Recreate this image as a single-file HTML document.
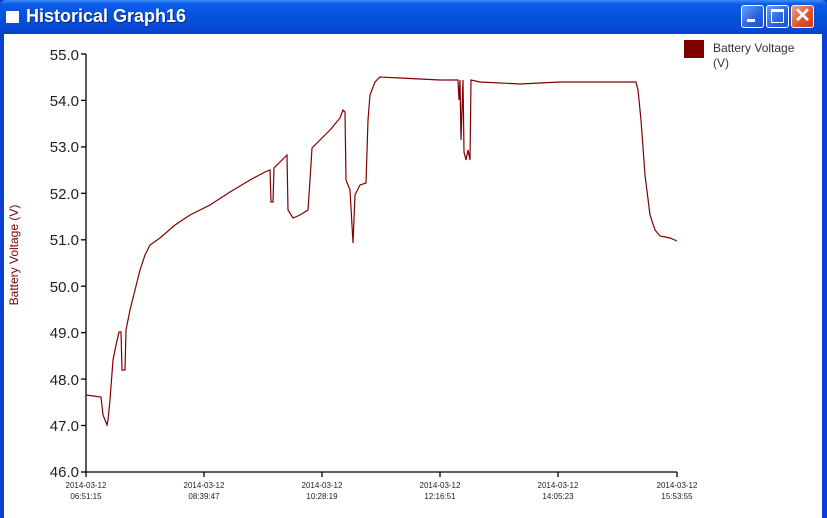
<!DOCTYPE html>
<html><head><meta charset="utf-8"><style>
html,body{margin:0;padding:0;width:827px;height:518px;overflow:hidden;background:#0a3fd6;font-family:"Liberation Sans",sans-serif}
.tb{position:absolute;left:0;top:0;width:827px;height:34px;background:linear-gradient(#3d8cf7 0,#0a5ce8 12%,#0551e0 50%,#0749d4 85%,#0a3fc4 100%);border-radius:6px 6px 0 0}
.title{position:absolute;left:26px;top:6px;color:#fff;font-weight:bold;font-size:18px;text-shadow:1px 1px #0a2a80}
.ico{position:absolute;left:6px;top:11px;width:13px;height:10px;background:#fff;border-top:2px solid #fff}
.btn{position:absolute;top:5px;width:21px;height:21px;border:1px solid #fff;border-radius:3px;background:linear-gradient(135deg,#6a9cf7,#2a62e0 60%,#1e50d0)}
.cl{background:linear-gradient(135deg,#f0a080,#e0502a 60%,#c8401a)}
.client{position:absolute;left:4px;top:34px;width:818px;height:484px;background:#fff}
</style></head><body>
<div class="tb"><div class="ico"></div><div class="title">Historical Graph16</div>
<div class="btn" style="left:741px"><div style="position:absolute;left:5px;top:13px;width:8px;height:3px;background:#fff"></div></div>
<div class="btn" style="left:766px"><div style="position:absolute;left:4px;top:3px;width:11px;height:10px;border:1px solid #fff;border-top:3px solid #fff"></div></div>
<div class="btn cl" style="left:791px;color:#fff;font-size:20px;font-weight:bold;text-align:center;line-height:21px">✕</div>
</div>
<div class="client"></div>
<svg width="827" height="518" style="position:absolute;left:0;top:0" font-family="Liberation Sans, sans-serif">
<g stroke="#000" stroke-width="1.3">
<line x1="86" y1="54" x2="86" y2="472"/><line x1="86" y1="472" x2="677" y2="472"/>
<line x1="81" y1="54" x2="86" y2="54"/><line x1="81" y1="100.4" x2="86" y2="100.4"/><line x1="81" y1="146.9" x2="86" y2="146.9"/><line x1="81" y1="193.3" x2="86" y2="193.3"/><line x1="81" y1="239.8" x2="86" y2="239.8"/><line x1="81" y1="286.2" x2="86" y2="286.2"/><line x1="81" y1="332.6" x2="86" y2="332.6"/><line x1="81" y1="379.1" x2="86" y2="379.1"/><line x1="81" y1="425.5" x2="86" y2="425.5"/><line x1="81" y1="472" x2="86" y2="472"/>
<line x1="86" y1="472" x2="86" y2="477"/><line x1="204" y1="472" x2="204" y2="477"/><line x1="322" y1="472" x2="322" y2="477"/><line x1="440" y1="472" x2="440" y2="477"/><line x1="558" y1="472" x2="558" y2="477"/><line x1="677" y1="472" x2="677" y2="477"/>
</g>
<g font-size="15" fill="#222" text-anchor="end">
<text x="79" y="60">55.0</text><text x="79" y="106">54.0</text><text x="79" y="152">53.0</text><text x="79" y="199">52.0</text><text x="79" y="245">51.0</text><text x="79" y="292">50.0</text><text x="79" y="338">49.0</text><text x="79" y="385">48.0</text><text x="79" y="431">47.0</text><text x="79" y="477">46.0</text>
</g>
<g font-size="8" fill="#222" text-anchor="middle">
<text x="86" y="488">2014-03-12</text><text x="86" y="499">06:51:15</text>
<text x="204" y="488">2014-03-12</text><text x="204" y="499">08:39:47</text>
<text x="322" y="488">2014-03-12</text><text x="322" y="499">10:28:19</text>
<text x="440" y="488">2014-03-12</text><text x="440" y="499">12:16:51</text>
<text x="558" y="488">2014-03-12</text><text x="558" y="499">14:05:23</text>
<text x="677" y="488">2014-03-12</text><text x="677" y="499">15:53:55</text>
</g>
<text transform="translate(18,255) rotate(-90)" font-size="12" fill="#800000" text-anchor="middle">Battery Voltage (V)</text>
<rect x="684" y="40" width="20" height="18" fill="#800000"/>
<text x="713" y="52" font-size="12" fill="#333">Battery Voltage</text><text x="713" y="67" font-size="12" fill="#333">(V)</text>
<polyline fill="none" stroke="#800000" stroke-width="1.2" points="86,395 101,397 103,415 107,425 108,420 110,400 113,360 116,345 119,332 121,332 122,370 125,370 126,330 130,310 135,290 140,270 145,255 150,245 160,238 175,225 190,215 210,205 230,192 250,180 265,172 270,170 271,202 273,202 274,168 280,162 287,155 288,210 293,218 300,215 308,210 310,180 312,148 320,140 330,130 340,118 343,110 345,112 346,180 350,190 353,243 355,195 360,185 366,183 368,120 370,95 375,82 380,77 400,78 420,79 440,80 458,80 459,100 460,80 461,140 463,80 464,152 466,160 468,150 470,160 471,80 480,82 520,84 560,82 600,82 636,82 638,90 641,120 645,175 650,215 655,230 660,236 670,238 677,241"/>
</svg>
</body></html>
